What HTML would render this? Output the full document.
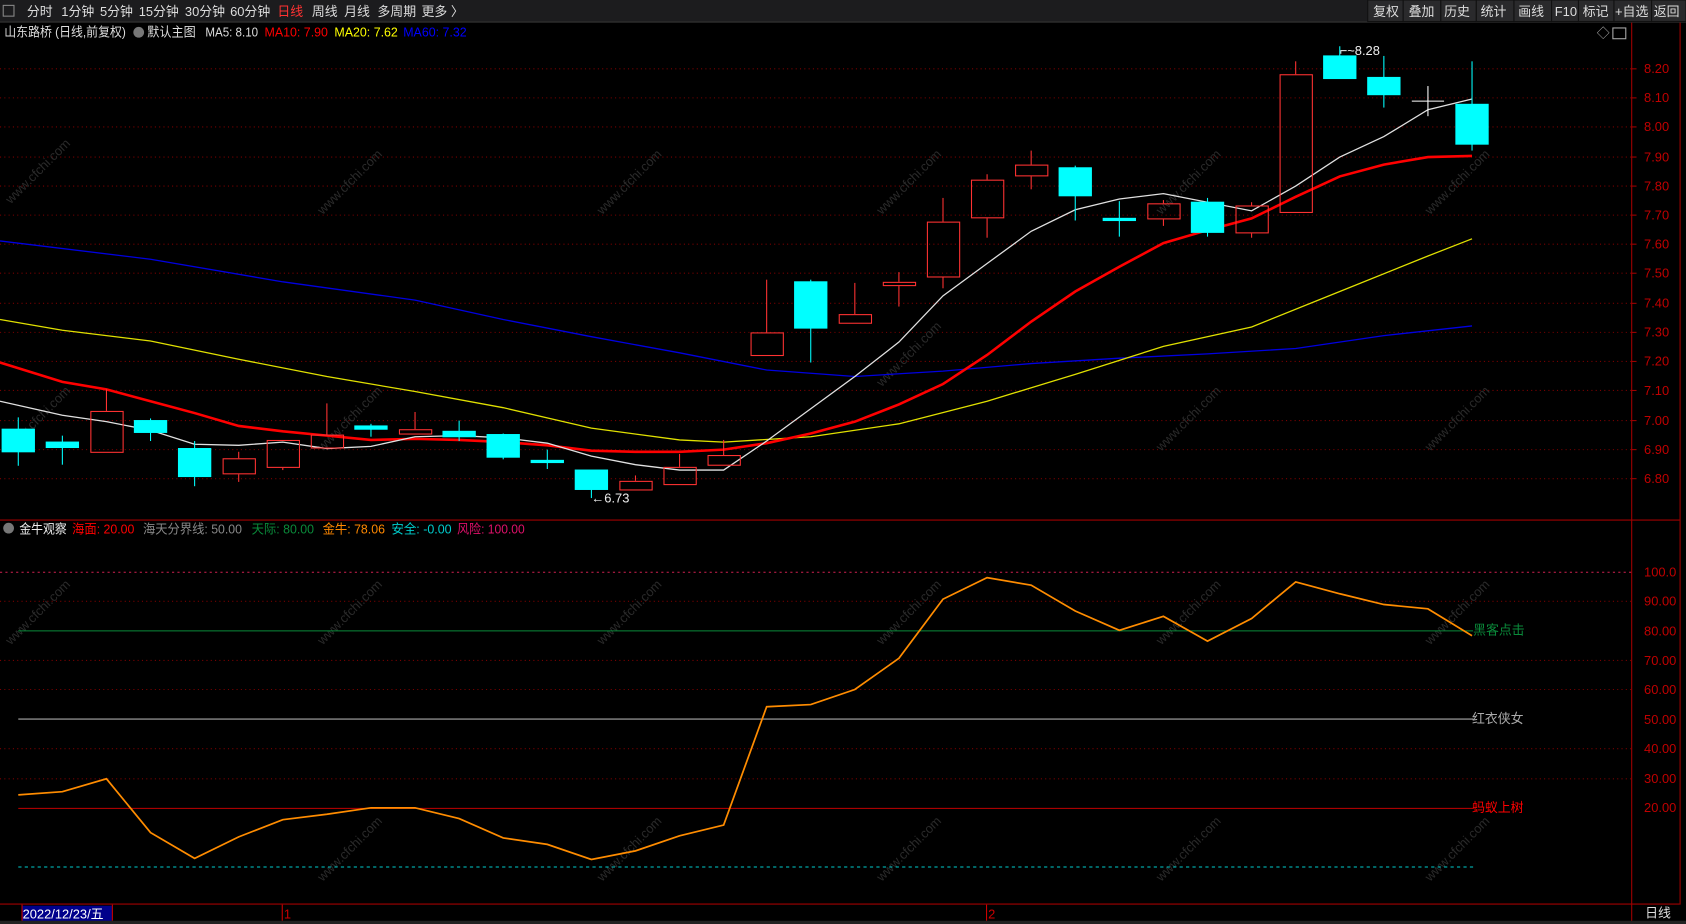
<!DOCTYPE html>
<html><head><meta charset="utf-8"><style>
html,body{margin:0;padding:0;background:#000;overflow:hidden}
svg{display:block}
text{font-family:"Liberation Sans","Noto Sans CJK SC",sans-serif;font-size:12px}
</style></head><body>
<svg width="1686" height="924" viewBox="0 0 1568 859" preserveAspectRatio="none" xmlns="http://www.w3.org/2000/svg">
<rect width="1568" height="859" fill="#000"/>
<!-- toolbar -->
<rect x="0" y="0" width="1568" height="20" fill="#1c1c1e"/>
<line x1="0" y1="20.5" x2="1568" y2="20.5" stroke="#333"/>
<rect x="3" y="5" width="10" height="10" fill="none" stroke="#888"/>
<g fill="#ddd">
<text x="25" y="15">分时</text><text x="57" y="15">1分钟</text><text x="93" y="15">5分钟</text><text x="129" y="15">15分钟</text><text x="172" y="15">30分钟</text><text x="214" y="15">60分钟</text>
<text x="258" y="15" fill="#ff3232">日线</text><text x="290" y="15">周线</text><text x="320" y="15">月线</text><text x="351" y="15">多周期</text><text x="392" y="15">更多 〉</text>
</g>
<g fill="#2a2a2c" stroke="#111"><rect x="1272" y="0" width="33" height="20"/><rect x="1305" y="0" width="35" height="20"/><rect x="1340" y="0" width="33" height="20"/><rect x="1373" y="0" width="35" height="20"/><rect x="1408" y="0" width="35" height="20"/><rect x="1443" y="0" width="25" height="20"/><rect x="1468" y="0" width="33" height="20"/><rect x="1501" y="0" width="35" height="20"/><rect x="1536" y="0" width="32" height="20"/></g>
<g fill="#ddd"><text x="1277" y="15">复权</text><text x="1310" y="15">叠加</text><text x="1343" y="15">历史</text><text x="1377" y="15">统计</text><text x="1412" y="15">画线</text><text x="1446" y="15">F10</text><text x="1472" y="15">标记</text><text x="1502" y="15">+自选</text><text x="1538" y="15">返回</text></g>
<!-- title -->
<text x="4" y="34" fill="#ddd" textLength="113" lengthAdjust="spacingAndGlyphs">山东路桥 (日线,前复权)</text>
<circle cx="129" cy="30" r="5" fill="#777"/><text x="137" y="34" fill="#ddd" textLength="45" lengthAdjust="spacingAndGlyphs">默认主图</text>
<text x="191" y="34" fill="#ddd" textLength="49" lengthAdjust="spacingAndGlyphs">MA5: 8.10</text><text x="246" y="34" fill="#f00" textLength="59" lengthAdjust="spacingAndGlyphs">MA10: 7.90</text><text x="311" y="34" fill="#ff0" textLength="59" lengthAdjust="spacingAndGlyphs">MA20: 7.62</text><text x="375" y="34" fill="#00f" textLength="59" lengthAdjust="spacingAndGlyphs">MA60: 7.32</text>
<text x="1485" y="35" fill="#aaa" font-size="11">◇</text><rect x="1500" y="26" width="12" height="10" fill="none" stroke="#aaa"/>
<!-- frame -->
<g stroke="#a00000" fill="none">
<line x1="1517.5" y1="21" x2="1517.5" y2="859"/>
<line x1="1562.5" y1="21" x2="1562.5" y2="841"/>
<line x1="0" y1="483.5" x2="1562" y2="483.5"/>
<line x1="0" y1="840.5" x2="1562" y2="840.5"/>
</g>
<!-- price grid -->
<g stroke="#7a0000" stroke-dasharray="1,3">
<line x1="0" y1="64" x2="1517" y2="64"/><line x1="0" y1="91" x2="1517" y2="91"/><line x1="0" y1="118" x2="1517" y2="118"/><line x1="0" y1="146" x2="1517" y2="146"/><line x1="0" y1="173" x2="1517" y2="173"/><line x1="0" y1="200" x2="1517" y2="200"/><line x1="0" y1="227" x2="1517" y2="227"/><line x1="0" y1="254" x2="1517" y2="254"/><line x1="0" y1="282" x2="1517" y2="282"/><line x1="0" y1="309" x2="1517" y2="309"/><line x1="0" y1="336" x2="1517" y2="336"/><line x1="0" y1="363" x2="1517" y2="363"/><line x1="0" y1="391" x2="1517" y2="391"/><line x1="0" y1="418" x2="1517" y2="418"/><line x1="0" y1="445" x2="1517" y2="445"/>
<line x1="0" y1="559" x2="1517" y2="559"/><line x1="0" y1="614" x2="1517" y2="614"/><line x1="0" y1="641" x2="1517" y2="641"/><line x1="0" y1="696" x2="1517" y2="696"/><line x1="0" y1="724" x2="1517" y2="724"/>
</g>
<line x1="0" y1="532" x2="1517" y2="532" stroke="#d02050" stroke-dasharray="2,3"/>
<g fill="#c00000" font-size="11">
<text x="1529" y="68">8.20</text><text x="1529" y="95">8.10</text><text x="1529" y="122">8.00</text><text x="1529" y="150">7.90</text><text x="1529" y="177">7.80</text><text x="1529" y="204">7.70</text><text x="1529" y="231">7.60</text><text x="1529" y="258">7.50</text><text x="1529" y="286">7.40</text><text x="1529" y="313">7.30</text><text x="1529" y="340">7.20</text><text x="1529" y="367">7.10</text><text x="1529" y="395">7.00</text><text x="1529" y="422">6.90</text><text x="1529" y="449">6.80</text>
<text x="1529" y="536">100.0</text><text x="1529" y="563">90.00</text><text x="1529" y="591">80.00</text><text x="1529" y="618">70.00</text><text x="1529" y="645">60.00</text><text x="1529" y="673">50.00</text><text x="1529" y="700">40.00</text><text x="1529" y="728">30.00</text><text x="1529" y="755">20.00</text>
</g>
<g stroke="#a00000"><line x1="1517" y1="64" x2="1522" y2="64"/><line x1="1517" y1="91" x2="1522" y2="91"/><line x1="1517" y1="118" x2="1522" y2="118"/><line x1="1517" y1="146" x2="1522" y2="146"/><line x1="1517" y1="173" x2="1522" y2="173"/><line x1="1517" y1="200" x2="1522" y2="200"/><line x1="1517" y1="227" x2="1522" y2="227"/><line x1="1517" y1="254" x2="1522" y2="254"/><line x1="1517" y1="282" x2="1522" y2="282"/><line x1="1517" y1="309" x2="1522" y2="309"/><line x1="1517" y1="336" x2="1522" y2="336"/><line x1="1517" y1="363" x2="1522" y2="363"/><line x1="1517" y1="391" x2="1522" y2="391"/><line x1="1517" y1="418" x2="1522" y2="418"/><line x1="1517" y1="445" x2="1522" y2="445"/></g>
<!-- watermarks -->
<g fill="#2a2a2a" font-size="22" font-family="Liberation Sans">
<text transform="translate(10,190) rotate(-45)">www.cfchi.com</text>
<text transform="translate(300,200) rotate(-45)">www.cfchi.com</text>
<text transform="translate(560,200) rotate(-45)">www.cfchi.com</text>
<text transform="translate(820,200) rotate(-45)">www.cfchi.com</text>
<text transform="translate(1080,200) rotate(-45)">www.cfchi.com</text>
<text transform="translate(1330,200) rotate(-45)">www.cfchi.com</text>
<text transform="translate(10,420) rotate(-45)">www.cfchi.com</text>
<text transform="translate(300,420) rotate(-45)">www.cfchi.com</text>
<text transform="translate(820,360) rotate(-45)">www.cfchi.com</text>
<text transform="translate(1080,420) rotate(-45)">www.cfchi.com</text>
<text transform="translate(1330,420) rotate(-45)">www.cfchi.com</text>
<text transform="translate(10,600) rotate(-45)">www.cfchi.com</text>
<text transform="translate(300,600) rotate(-45)">www.cfchi.com</text>
<text transform="translate(560,600) rotate(-45)">www.cfchi.com</text>
<text transform="translate(820,600) rotate(-45)">www.cfchi.com</text>
<text transform="translate(1080,600) rotate(-45)">www.cfchi.com</text>
<text transform="translate(1330,600) rotate(-45)">www.cfchi.com</text>
<text transform="translate(300,820) rotate(-45)">www.cfchi.com</text>
<text transform="translate(560,820) rotate(-45)">www.cfchi.com</text>
<text transform="translate(820,820) rotate(-45)">www.cfchi.com</text>
<text transform="translate(1080,820) rotate(-45)">www.cfchi.com</text>
<text transform="translate(1330,820) rotate(-45)">www.cfchi.com</text>
</g>
<!-- MA lines -->
<polyline fill="none" stroke="#0000e0" stroke-width="1.2" points="0,224 140,241 263,262 386,279 468,297 550,313 632,328 713,344 795,350 877,345 959,338 1041,333 1123,329 1205,324 1287,312 1369,303"/>
<polyline fill="none" stroke="#e0e000" stroke-width="1.2" points="0,297 58,307 140,317 222,334 304,350 386,364 468,379 550,398 632,409 673,411 754,406 836,394 918,373 1000,348 1082,322 1164,304 1246,271 1328,238 1369,222"/>
<polyline fill="none" stroke="#ff0000" stroke-width="2.4" points="0,337 58,355 99,362 140,373 181,384 222,396 263,401 304,405 345,409 386,408 427,409 468,411 509,414 550,419 591,420 632,420 673,418 713,412 754,403 795,392 836,376 877,357 918,330 959,299 1000,271 1041,248 1082,226 1123,214 1164,203 1205,183 1246,164 1287,153 1328,146 1369,145"/>
<polyline fill="none" stroke="#e0e0e0" stroke-width="1.2" points="0,373 58,386 99,392 140,400 181,413 222,414 263,411 304,417 345,415 386,406 427,405 468,407 509,412 550,424 591,432 632,437 673,437 713,410 754,380 795,350 836,318 877,275 918,245 959,215 1000,195 1041,185 1082,180 1123,188 1164,196 1205,173 1246,146 1287,127 1328,102 1369,92"/>
<!-- candles cyan -->
<g fill="#00ffff" stroke="#00ffff">
<line x1="17" y1="388" x2="17" y2="433"/><rect x="2" y="399" width="30" height="21"/>
<line x1="58" y1="405" x2="58" y2="432"/><rect x="43" y="411" width="30" height="5"/>
<line x1="140" y1="389" x2="140" y2="410"/><rect x="125" y="391" width="30" height="11"/>
<line x1="181" y1="410" x2="181" y2="452"/><rect x="166" y="417" width="30" height="26"/>
<line x1="345" y1="394" x2="345" y2="406"/><rect x="330" y="396" width="30" height="3"/>
<line x1="427" y1="391" x2="427" y2="410"/><rect x="412" y="401" width="30" height="5"/>
<line x1="468" y1="403" x2="468" y2="427"/><rect x="453" y="404" width="30" height="21"/>
<line x1="509" y1="418" x2="509" y2="436"/><rect x="494" y="428" width="30" height="2"/>
<line x1="550" y1="437" x2="550" y2="463"/><rect x="535" y="437" width="30" height="18"/>
<line x1="754" y1="260" x2="754" y2="337"/><rect x="739" y="262" width="30" height="43"/>
<line x1="1000" y1="154" x2="1000" y2="205"/><rect x="985" y="156" width="30" height="26"/>
<line x1="1041" y1="187" x2="1041" y2="220"/><rect x="1026" y="203" width="30" height="2"/>
<line x1="1123" y1="184" x2="1123" y2="220"/><rect x="1108" y="188" width="30" height="28"/>
<line x1="1246" y1="43" x2="1246" y2="73"/><rect x="1231" y="52" width="30" height="21"/>
<line x1="1287" y1="52" x2="1287" y2="100"/><rect x="1272" y="72" width="30" height="16"/>
<line x1="1369" y1="57" x2="1369" y2="140"/><rect x="1354" y="97" width="30" height="37"/>
</g>
<g stroke="#fff"><line x1="1328" y1="80" x2="1328" y2="108"/><line x1="1313" y1="94" x2="1343" y2="94"/></g>
<!-- candles red -->
<g fill="none" stroke="#ff3232">
<rect x="84.5" y="382.5" width="30" height="38"/><line x1="99" y1="362" x2="99" y2="382"/>
<rect x="207.5" y="426.5" width="30" height="14"/><line x1="222" y1="420" x2="222" y2="426"/><line x1="222" y1="441" x2="222" y2="448"/>
<rect x="248.5" y="409.5" width="30" height="25"/><line x1="263" y1="435" x2="263" y2="437"/>
<rect x="289.5" y="404.5" width="30" height="12"/><line x1="304" y1="375" x2="304" y2="404"/>
<rect x="371.5" y="399.5" width="30" height="4"/><line x1="386" y1="383" x2="386" y2="399"/>
<rect x="576.5" y="447.5" width="30" height="8"/><line x1="591" y1="442" x2="591" y2="447"/>
<rect x="617.5" y="434.5" width="30" height="16"/><line x1="632" y1="422" x2="632" y2="434"/>
<rect x="658.5" y="423.5" width="30" height="9"/><line x1="673" y1="409" x2="673" y2="423"/>
<rect x="698.5" y="309.5" width="30" height="21"/><line x1="713" y1="260" x2="713" y2="309"/>
<rect x="780.5" y="292.5" width="30" height="8"/><line x1="795" y1="263" x2="795" y2="292"/>
<rect x="821.5" y="262.5" width="30" height="3"/><line x1="836" y1="253" x2="836" y2="262"/><line x1="836" y1="266" x2="836" y2="285"/>
<rect x="862.5" y="206.5" width="30" height="51"/><line x1="877" y1="184" x2="877" y2="206"/><line x1="877" y1="258" x2="877" y2="268"/>
<rect x="903.5" y="167.5" width="30" height="35"/><line x1="918" y1="162" x2="918" y2="167"/><line x1="918" y1="203" x2="918" y2="221"/>
<rect x="944.5" y="153.5" width="30" height="10"/><line x1="959" y1="140" x2="959" y2="153"/><line x1="959" y1="164" x2="959" y2="176"/>
<rect x="1067.5" y="189.5" width="30" height="14"/><line x1="1082" y1="186" x2="1082" y2="189"/><line x1="1082" y1="204" x2="1082" y2="210"/>
<rect x="1149.5" y="191.5" width="30" height="25"/><line x1="1164" y1="188" x2="1164" y2="191"/><line x1="1164" y1="217" x2="1164" y2="221"/>
<rect x="1190.5" y="69.5" width="30" height="128"/><line x1="1205" y1="57" x2="1205" y2="69"/>
</g>
<text x="1246" y="51" fill="#eee" font-size="11">⌐~8.28</text>
<text x="550" y="467" fill="#eee" font-size="11">←6.73</text>
<!-- indicator -->
<circle cx="8" cy="491" r="5" fill="#777"/>
<text x="18" y="496" fill="#eee" textLength="44" lengthAdjust="spacingAndGlyphs">金牛观察</text>
<text x="67" y="496" fill="#f00" textLength="58" lengthAdjust="spacingAndGlyphs">海面: 20.00</text>
<text x="133" y="496" fill="#888" textLength="92" lengthAdjust="spacingAndGlyphs">海天分界线: 50.00</text>
<text x="234" y="496" fill="#0a8a3a" textLength="58" lengthAdjust="spacingAndGlyphs">天际: 80.00</text>
<text x="300" y="496" fill="#f80" textLength="58" lengthAdjust="spacingAndGlyphs">金牛: 78.06</text>
<text x="364" y="496" fill="#0cc" textLength="56" lengthAdjust="spacingAndGlyphs">安全: -0.00</text>
<text x="425" y="496" fill="#e0106a" textLength="63" lengthAdjust="spacingAndGlyphs">风险: 100.00</text>
<line x1="17" y1="586.5" x2="1370" y2="586.5" stroke="#0a8a3a"/>
<line x1="17" y1="668.5" x2="1370" y2="668.5" stroke="#aaa"/>
<line x1="17" y1="751.5" x2="1370" y2="751.5" stroke="#c00000"/>
<line x1="17" y1="806" x2="1370" y2="806" stroke="#0cc" stroke-dasharray="3,3"/>
<text x="1370" y="590" fill="#0a8a3a" font-size="11">黑客点击</text>
<text x="1369" y="672" fill="#aaa" font-size="11">红衣侠女</text>
<text x="1369" y="755" fill="#f00" font-size="11">蚂蚁上树</text>
<polyline fill="none" stroke="#ff8c00" stroke-width="1.6" points="17,739 58,736 99,724 140,774 181,798 222,778 263,762 304,757 345,751 386,751 427,761 468,779 509,785 550,799 591,791 632,777 673,767 713,657 754,655 795,641 836,612 877,557 918,537 959,544 1000,568 1041,586 1082,573 1123,596 1164,575 1205,541 1246,552 1287,562 1328,566 1369,591"/>
<!-- bottom -->
<rect x="20" y="842" width="84" height="15" fill="#00008b"/>
<line x1="20.5" y1="841" x2="20.5" y2="856" stroke="#c00"/><line x1="104.5" y1="841" x2="104.5" y2="856" stroke="#c00"/>
<text x="21" y="854" fill="#fff">2022/12/23/五</text>
<line x1="262.5" y1="841" x2="262.5" y2="856" stroke="#c00"/><text x="264" y="854" fill="#c00">1</text>
<line x1="917.5" y1="841" x2="917.5" y2="856" stroke="#c00"/><text x="919" y="854" fill="#c00">2</text>
<text x="1530" y="853" fill="#ddd">日线</text>
<rect x="0" y="856" width="1568" height="3" fill="#222"/>
</svg>
</body></html>
